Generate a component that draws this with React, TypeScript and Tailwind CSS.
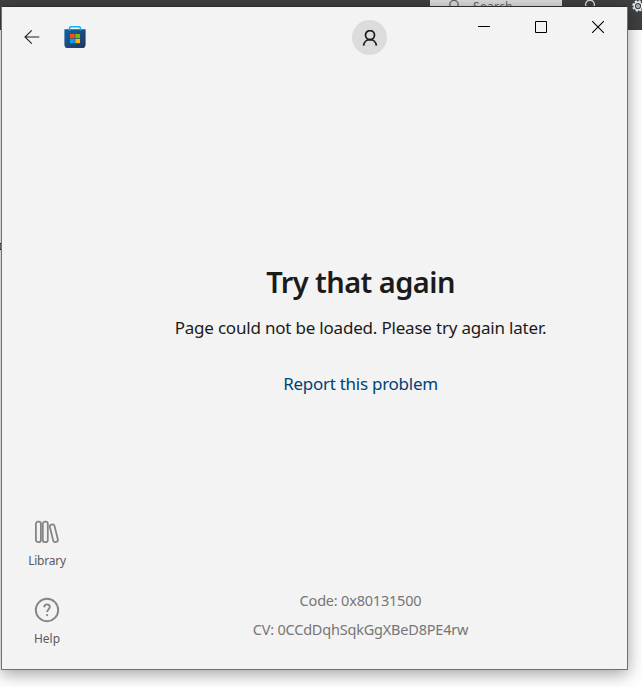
function BackdropPage() {
  return (
    <div className="h-full bg-white">
      <div className="flex h-[30px] bg-[#404040]">
        <div className="ml-[430px] flex h-[15px] w-[132px] shrink-0 items-start bg-[#dcdcdc] text-[#666]">
          <svg className="ml-[17px] h-[16px] w-[16px]" viewBox="0 0 16 16" fill="none" stroke="currentColor" strokeWidth="1.3">
            <circle cx="7" cy="4.6" r="4.2" />
          </svg>
          <span className="ml-[10px] font-['Noto_Sans'] text-[12px] leading-[13px] tracking-[0.3px]">Search</span>
        </div>
        <svg className="ml-[22px] h-[16px] w-[12px] shrink-0" viewBox="0 0 12 16" fill="none" stroke="#d9d9d9" strokeWidth="1.4">
          <circle cx="6" cy="4.6" r="4.4" />
        </svg>
        <svg className="ml-[36px] h-[12px] w-[12px] shrink-0" viewBox="0 0 12 12" fill="none" stroke="#e4eef5">
          <circle cx="6" cy="6" r="4.9" strokeWidth="1.8" strokeDasharray="2.2 1.648" />
          <circle cx="6" cy="6" r="3.8" strokeWidth="1.4" />
          <circle cx="6" cy="6" r="1.3" strokeWidth="1.1" />
        </svg>
      </div>
      <div className="mt-[213px] h-[7px] w-[2px] border-y border-[#222] bg-[#777]" />
    </div>
  );
}

function StoreLogo() {
  return (
    <svg className="h-[23px] w-[22px]" viewBox="0 0 22 23">
      <defs>
        <linearGradient id="bag" x1="0" y1="0" x2="1" y2="1">
          <stop offset="0" stopColor="#1261a3" />
          <stop offset="1" stopColor="#24345f" />
        </linearGradient>
      </defs>
      <path d="M0.4 3.2h21.2v15.2a3.6 3.6 0 0 1-3.6 3.6H4a3.6 3.6 0 0 1-3.6-3.6z" fill="url(#bag)" />
      <path d="M5.6 4.6V1.9A1.2 1.2 0 0 1 6.8.8h8.4a1.2 1.2 0 0 1 1.2 1.1v2.7" fill="none" stroke="#12b1f5" strokeWidth="1.5" />
      <path d="M6 8h4.7v4.3H6z" fill="#f25022" />
      <path d="M11.3 8H16v4.3h-4.7z" fill="#7fba00" />
      <path d="M6 13h4.7v4.2H6z" fill="#00a4ef" />
      <path d="M11.3 13H16v4.2h-4.7z" fill="#ffb900" />
    </svg>
  );
}

function TitleBar() {
  return (
    <header className="flex h-[60px] items-start">
      <button aria-label="Back" className="ml-[22px] mt-[22px]">
        <svg className="block h-[16px] w-[16px]" viewBox="0 0 16 16" fill="none" stroke="#222" strokeWidth="1.1">
          <path d="M15.3 8H1M7.8 1.4L1 8l6.8 6.6" />
        </svg>
      </button>
      <div className="ml-[24px] mt-[19px]">
        <StoreLogo />
      </div>
      <button aria-label="Account" className="ml-[266px] mt-[13px] flex size-[35px] items-center justify-center rounded-full bg-[#dcdcdc]">
        <svg className="h-[16px] w-[16px]" viewBox="0 0 16 16" fill="none" stroke="#1a1a1a" strokeWidth="1.7">
          <circle cx="8" cy="5.1" r="4.5" />
          <path d="M1.6 15.6C1.9 12 4.5 9.6 8 9.6s6.1 2.4 6.4 6" />
        </svg>
      </button>
      <div className="ml-[91px] mt-[14px] flex items-center gap-[45px]">
        <svg className="h-[12px] w-[12px]" viewBox="0 0 12 12"><path d="M0 5.5h12" stroke="#000" /></svg>
        <svg className="h-[12px] w-[12px]" viewBox="0 0 12 12"><path d="M.5.5h11v11H.5z" fill="none" stroke="#000" /></svg>
        <svg className="h-[12px] w-[12px]" viewBox="0 0 12 12"><path d="M0 0l12 12M12 0L0 12" stroke="#000" strokeWidth="1.1" /></svg>
      </div>
    </header>
  );
}

function Sidebar() {
  return (
    <nav className="flex w-[90px] flex-col items-center justify-end pb-[21px] text-[12px] leading-[18px] text-[#5a5a5a]">
      <svg className="h-[24px] w-[26px]" viewBox="0 0 26 24" fill="none" stroke="#858585" strokeWidth="1.8">
        <rect x="1.9" y="1.7" width="5" height="20.4" rx="2.2" />
        <rect x="8.8" y="1.7" width="5" height="20.4" rx="2.2" />
        <rect x="17.4" y="4.3" width="4.8" height="18" rx="2.2" transform="rotate(-14 19.8 13)" />
      </svg>
      <span className="mt-[8px] tracking-[-0.25px]">Library</span>
      <svg className="mt-[27px] h-[26px] w-[26px]" viewBox="0 0 26 26" fill="none" stroke="#858585" strokeWidth="1.9">
        <circle cx="13" cy="13" r="11.2" />
        <path d="M10.2 10.3c0-1.8 1.2-2.9 2.8-2.9s2.8 1.1 2.8 2.7c0 2.2-2.7 2.4-2.7 5" />
        <circle cx="13.1" cy="18.1" r="1.1" fill="#858585" stroke="none" />
      </svg>
      <span className="mt-[7px]">Help</span>
    </nav>
  );
}

export default function App() {
  return (
    <div className="relative h-[687px] w-[642px] overflow-hidden font-['Noto_Sans',sans-serif]">
      <BackdropPage />
      <div className="absolute left-[1px] top-[6px] flex h-[664px] w-[627px] flex-col border border-[#707070] border-t-[#2b2b2b] bg-[#f3f3f3] shadow-[0_4px_16px_rgba(0,0,0,0.38)]">
        <TitleBar />
        <div className="flex min-h-0 flex-1">
          <Sidebar />
          <main className="ml-[2px] flex flex-1 flex-col items-center whitespace-nowrap text-[#1b1b1b]">
            <h1 className="mt-[195px] text-[29px] font-semibold leading-[40px] tracking-[-0.55px]">Try that again</h1>
            <p className="mt-[14px] text-[17px] leading-[24px] tracking-[-0.2px]">Page could not be loaded. Please try again later.</p>
            <a className="mt-[32px] text-[17px] leading-[24px] tracking-[-0.27px] text-[#004275]">Report this problem</a>
            <div className="mt-auto flex flex-col items-center pb-[25px] text-[14.5px] leading-[29px] tracking-[-0.2px] text-[#767676]">
              <span>Code: 0x80131500</span>
              <span>CV: 0CCdDqhSqkGgXBeD8PE4rw</span>
            </div>
          </main>
        </div>
      </div>
    </div>
  );
}
